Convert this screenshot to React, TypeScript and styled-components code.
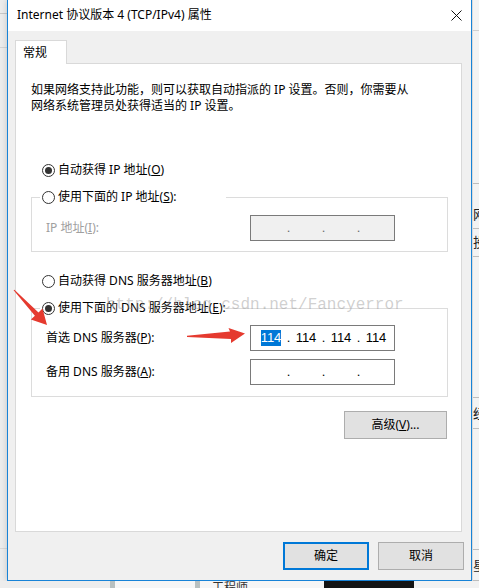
import React from "react";
import styled, { createGlobalStyle } from "styled-components";

const GlobalStyle = createGlobalStyle`
  html, body { margin: 0; padding: 0; }
  body {
    width: 479px;
    height: 588px;
    overflow: hidden;
    background: #efefef;
    font-family: "Noto Sans", "Noto Sans CJK SC", sans-serif;
    font-size: 12px;
    color: #000;
  }
`;

const Page = styled.div`
  position: relative;
  width: 479px;
  height: 588px;
  display: flex;
  flex-direction: column;
  overflow: hidden;
`;

const Stage = styled.div`
  display: flex;
  height: 581px;
  flex-shrink: 0;
`;

const LeftBackdrop = styled.div`
  width: 7px;
  flex-shrink: 0;
  background: #ececec;
  display: flex;
  flex-direction: column;
`;

const BackdropLine = styled.div<{ $h: number; $color?: string }>`
  height: ${(p) => p.$h}px;
  flex-shrink: 0;
  border-bottom: 1px solid ${(p) => p.$color || "#c8c8c8"};
`;

const BackdropSpacer = styled.div<{ $h: number }>`
  height: ${(p) => p.$h}px;
  flex-shrink: 0;
`;

const RightBackdrop = styled.div`
  flex: 1;
  background: #f3f3f3;
  display: flex;
  flex-direction: column;
  overflow: hidden;
  border-left: 1px solid #dadada;
`;

const BackdropGlyph = styled.div<{ $h: number }>`
  height: ${(p) => p.$h}px;
  flex-shrink: 0;
  border-bottom: 1px solid #bdbdbd;
  font-size: 13px;
  line-height: ${(p) => p.$h}px;
  color: #222;
  white-space: nowrap;
  overflow: hidden;
`;

const BottomBackdrop = styled.div`
  flex: 1;
  display: flex;
  background: #f2f2f2;
  overflow: hidden;
`;

const BottomPiece = styled.div<{ $w: number; $bg: string }>`
  width: ${(p) => p.$w}px;
  flex-shrink: 0;
  background: ${(p) => p.$bg};
  font-size: 12px;
  line-height: 14px;
  color: #333;
  overflow: hidden;
  white-space: nowrap;
`;

const Dialog = styled.div`
  width: 465px;
  height: 581px;
  flex-shrink: 0;
  box-sizing: border-box;
  border: 1px solid #1883d7;
  border-top: none;
  background: #f0f0f0;
  display: flex;
  flex-direction: column;
  box-shadow: 0 0 6px rgba(0, 0, 0, 0.18);
`;

const TitleBar = styled.div`
  height: 31px;
  flex-shrink: 0;
  background: #fff;
  display: flex;
  align-items: center;
  justify-content: space-between;
  padding: 0 9px;
  box-sizing: border-box;
`;

const TitleText = styled.span`
  font-size: 12px;
  line-height: 16px;
  padding-bottom: 1px;
`;

const CloseIcon = styled.svg`
  width: 11px;
  height: 11px;
  display: block;
`;

const Body = styled.div`
  flex: 1;
  display: flex;
  flex-direction: column;
  padding: 9px 7px 0 7px;
`;

const Tab = styled.div`
  align-self: flex-start;
  width: 52px;
  height: 24px;
  box-sizing: border-box;
  border: 1px solid #d9d9d9;
  border-bottom: none;
  background: #fff;
  margin-bottom: -1px;
  position: relative;
  z-index: 1;
  display: flex;
  align-items: center;
  padding-left: 7px;
  line-height: 16px;
`;

const Panel = styled.div`
  width: 447px;
  height: 469px;
  flex-shrink: 0;
  box-sizing: border-box;
  border: 1px solid #d9d9d9;
  background: #fff;
  padding: 18px 13px 0 15px;
  display: flex;
  flex-direction: column;
`;

const Description = styled.p`
  margin: 0;
  line-height: 16px;
  white-space: nowrap;
`;

const RadioRow = styled.div<{ $mt?: number; $indent?: number }>`
  display: flex;
  align-items: center;
  gap: 3px;
  height: 20px;
  margin-top: ${(p) => p.$mt || 0}px;
  padding-left: ${(p) => p.$indent || 0}px;
  line-height: 16px;
  white-space: nowrap;
`;

const Radio = styled.span<{ $checked?: boolean }>`
  width: 13px;
  height: 13px;
  box-sizing: border-box;
  border-radius: 50%;
  border: 1px solid #333;
  background: #fff;
  display: flex;
  align-items: center;
  justify-content: center;
  flex-shrink: 0;
  &::after {
    content: "";
    width: 7px;
    height: 7px;
    border-radius: 50%;
    background: #333;
    display: ${(p) => (p.$checked ? "block" : "none")};
  }
`;

const Group = styled.fieldset<{ $mt: number; $pb: number }>`
  margin: ${(p) => p.$mt}px 0 0 0;
  padding: 0 0 ${(p) => p.$pb}px 0;
  width: 417px;
  min-width: 0;
  box-sizing: border-box;
  border: 1px solid #dcdcdc;
`;

const Legend = styled.legend`
  margin-left: 8px;
  padding: 0 2px;
  width: 186px;
  height: 20px;
  box-sizing: border-box;
`;

const FieldRow = styled.div<{ $mt: number }>`
  display: flex;
  align-items: center;
  justify-content: space-between;
  height: 26px;
  margin-top: ${(p) => p.$mt}px;
  padding: 0 52px 0 14px;
  line-height: 16px;
  white-space: nowrap;
`;

const FieldLabel = styled.span<{ $disabled?: boolean }>`
  color: ${(p) => (p.$disabled ? "#a0a0a0" : "#000")};
`;

const IpBox = styled.div<{ $disabled?: boolean }>`
  width: 145px;
  height: 26px;
  box-sizing: border-box;
  border: 1px solid #7a7a7a;
  background: ${(p) => (p.$disabled ? "#f0f0f0" : "#fff")};
  display: flex;
  align-items: center;
  padding-left: 5px;
  font-family: "Liberation Sans", Arial, sans-serif;
  font-size: 13px;
  color: ${(p) => (p.$disabled ? "#6d6d6d" : "#000")};
`;

const Octet = styled.span`
  width: 30px;
  text-align: center;
  line-height: 16px;
`;

const OctetDot = styled.span`
  width: 5px;
  text-align: center;
  line-height: 16px;
`;

const Selected = styled.span`
  display: inline-block;
  background: #0078d7;
  color: #fff;
  line-height: 16px;
`;

const ButtonRow = styled.div<{ $mt: number; $gap?: number; $pr?: number }>`
  display: flex;
  justify-content: flex-end;
  gap: ${(p) => p.$gap || 0}px;
  margin-top: ${(p) => p.$mt}px;
  padding-right: ${(p) => p.$pr || 0}px;
`;

const AdvancedRow = styled(ButtonRow)`
  width: 417px;
  box-sizing: border-box;
`;

const Button = styled.button<{ $w: number; $primary?: boolean }>`
  width: ${(p) => p.$w}px;
  height: 28px;
  box-sizing: border-box;
  padding: 0;
  background: #e1e1e1;
  border: ${(p) => (p.$primary ? "2px solid #0078d7" : "1px solid #adadad")};
  font-family: "Noto Sans", "Noto Sans CJK SC", sans-serif;
  font-size: 12px;
  line-height: 16px;
  color: #000;
`;

const Overlay = styled.svg`
  position: absolute;
  left: 0;
  top: 0;
  width: 479px;
  height: 588px;
  pointer-events: none;
`;

const Watermark = styled.span`
  position: absolute;
  left: 106px;
  top: 297px;
  font-family: "Liberation Mono", "Courier New", monospace;
  font-size: 16px;
  line-height: 16px;
  color: rgba(150, 150, 150, 0.45);
  white-space: nowrap;
  pointer-events: none;
`;

function IpAddress({ values, disabled, selectFirst }: { values: string[]; disabled?: boolean; selectFirst?: boolean }) {
  return (
    <IpBox $disabled={disabled}>
      {values.map((v, i) => (
        <React.Fragment key={i}>
          <Octet>{i === 0 && selectFirst ? <Selected>{v}</Selected> : v}</Octet>
          {i < 3 && <OctetDot>.</OctetDot>}
        </React.Fragment>
      ))}
    </IpBox>
  );
}

export default function App() {
  return (
    <>
      <GlobalStyle />
      <Page>
        <Stage>
          <LeftBackdrop>
            <BackdropLine $h={13} />
            <BackdropLine $h={33} $color="#d4d4d4" />
            <BackdropLine $h={500} $color="#d8d8d8" />
          </LeftBackdrop>
          <Dialog>
            <TitleBar>
              <TitleText>Internet 协议版本 4 (TCP/IPv4) 属性</TitleText>
              <CloseIcon viewBox="0 0 11 11">
                <path d="M0.5 0.5 L10.5 10.5 M10.5 0.5 L0.5 10.5" stroke="#111" strokeWidth="1" fill="none" />
              </CloseIcon>
            </TitleBar>
            <Body>
              <Tab>常规</Tab>
              <Panel>
                <Description>
                  如果网络支持此功能，则可以获取自动指派的 IP 设置。否则，你需要从
                  <br />
                  网络系统管理员处获得适当的 IP 设置。
                </Description>

                <RadioRow $mt={46} $indent={11}>
                  <Radio $checked />
                  <span>
                    自动获得 IP 地址(<u>O</u>)
                  </span>
                </RadioRow>

                <Group $mt={7} $pb={10}>
                  <Legend>
                    <RadioRow>
                      <Radio />
                      <span>
                        使用下面的 IP 地址(<u>S</u>):
                      </span>
                    </RadioRow>
                  </Legend>
                  <FieldRow $mt={8}>
                    <FieldLabel $disabled>
                      IP 地址(<u>I</u>):
                    </FieldLabel>
                    <IpAddress values={["", "", "", ""]} disabled />
                  </FieldRow>
                </Group>

                <RadioRow $mt={19} $indent={11}>
                  <Radio />
                  <span>
                    自动获得 DNS 服务器地址(<u>B</u>)
                  </span>
                </RadioRow>

                <Group $mt={7} $pb={11}>
                  <Legend>
                    <RadioRow>
                      <Radio $checked />
                      <span>
                        使用下面的 DNS 服务器地址(<u>E</u>):
                      </span>
                    </RadioRow>
                  </Legend>
                  <FieldRow $mt={7}>
                    <FieldLabel>
                      首选 DNS 服务器(<u>P</u>):
                    </FieldLabel>
                    <IpAddress values={["114", "114", "114", "114"]} selectFirst />
                  </FieldRow>
                  <FieldRow $mt={8}>
                    <FieldLabel>
                      备用 DNS 服务器(<u>A</u>):
                    </FieldLabel>
                    <IpAddress values={["", "", "", ""]} />
                  </FieldRow>
                </Group>

                <AdvancedRow $mt={14} $pr={1}>
                  <Button $w={103}>
                    高级(<u>V</u>)...
                  </Button>
                </AdvancedRow>
              </Panel>
              <ButtonRow $mt={10} $gap={9}>
                <Button $w={86} $primary>
                  确定
                </Button>
                <Button $w={86}>取消</Button>
              </ButtonRow>
            </Body>
          </Dialog>
          <RightBackdrop>
            <BackdropLine $h={30} $color="#d0d0d0" />
            <BackdropLine $h={152} $color="#bdbdbd" />
            <BackdropSpacer $h={17} />
            <BackdropGlyph $h={27}>网</BackdropGlyph>
            <BackdropGlyph $h={27}>投</BackdropGlyph>
            <BackdropLine $h={140} $color="#bdbdbd" />
            <BackdropGlyph $h={30}>经</BackdropGlyph>
            <BackdropLine $h={120} $color="#bdbdbd" />
            <BackdropGlyph $h={30}>星</BackdropGlyph>
          </RightBackdrop>
        </Stage>
        <BottomBackdrop>
          <BottomPiece $w={110} $bg="#ededed" />
          <BottomPiece $w={5} $bg="#b8c0c0" />
          <BottomPiece $w={80} $bg="#f6f6f6" />
          <BottomPiece $w={5} $bg="#b8c0c0" />
          <BottomPiece $w={12} $bg="#f6f6f6" />
          <BottomPiece $w={112} $bg="#f6f6f6">
            工程师
          </BottomPiece>
          <BottomPiece $w={90} $bg="#141414" />
          <BottomPiece $w={65} $bg="#f2f2f2" />
        </BottomBackdrop>

        <Watermark>http://blog.csdn.net/Fancyerror</Watermark>
        <Overlay viewBox="0 0 479 588">
          <polygon
            points="14.4,289.7 38.5,312.4 42.5,308.6 47,325 30.9,319.6 34.9,315.8 13.6,290.3"
            fill="#e53a2f"
          />
          <polygon
            points="187,335.8 230,331.6 228.5,328 245,333.6 231,343 231,339 187,337"
            fill="#e53a2f"
          />
        </Overlay>
      </Page>
    </>
  );
}
